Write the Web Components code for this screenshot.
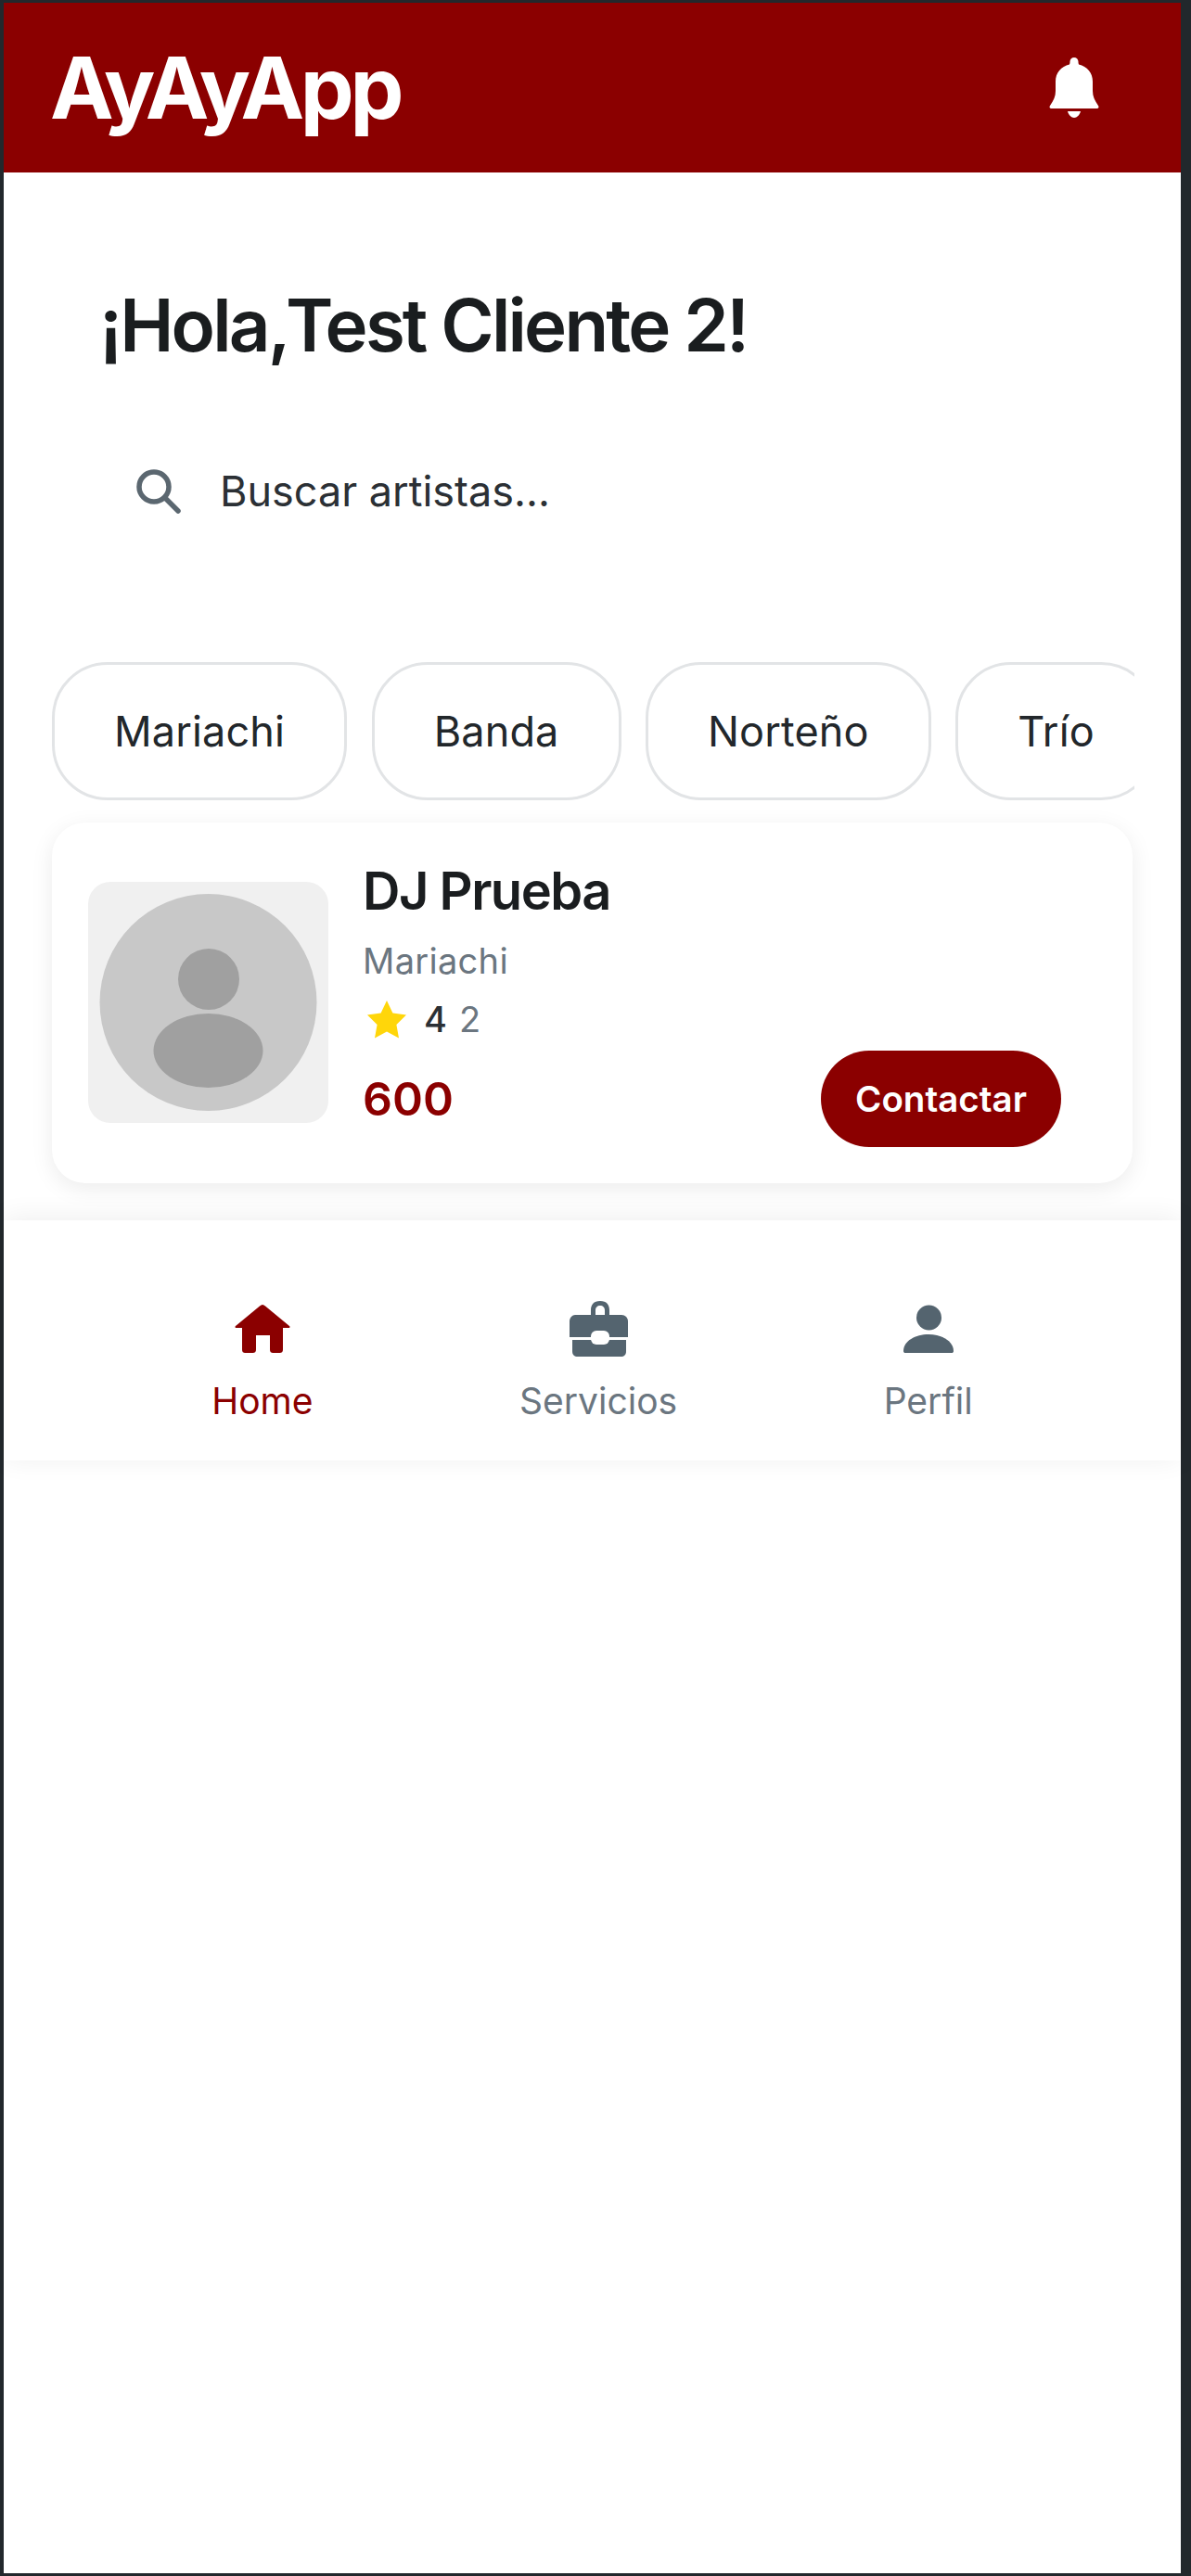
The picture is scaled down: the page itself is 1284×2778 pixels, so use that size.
<!DOCTYPE html>
<html><head><meta charset="utf-8"><style>
html,body{margin:0;padding:0;background:#22282c;height:2778px;overflow:hidden}
body{font-family:Inter,"Liberation Sans",sans-serif;box-sizing:border-box;padding:3px 11px 3px 4px}
</style></head><body>
<app-frame>
  <app-header slot="top" title-text="AyAyApp"></app-header>
  <greeting-title>¡Hola,Test Cliente 2!</greeting-title>
  <search-box placeholder="Buscar artistas..."></search-box>
  <chip-row>
    <filter-chip>Mariachi</filter-chip>
    <filter-chip>Banda</filter-chip>
    <filter-chip>Norteño</filter-chip>
    <filter-chip>Trío</filter-chip>
  </chip-row>
  <artist-card name="DJ Prueba" genre="Mariachi" rating="4" count="2" price="600"></artist-card>
  <bottom-nav></bottom-nav>
</app-frame>
<script>
function def(name, html){
  const t=document.createElement('template');t.innerHTML=html;
  customElements.define(name, class extends HTMLElement{
    connectedCallback(){ if(this.shadowRoot) return; const s=this.attachShadow({mode:'open'});
      s.appendChild(t.content.cloneNode(true));
      s.querySelectorAll('[data-a]').forEach(e=>{e.textContent=this.getAttribute(e.dataset.a)||''});
    }
  });
}
def('app-frame',`<style>:host{display:block;background:#fff;height:2772px;color:#1a1d1f}</style><slot name="top"></slot><slot></slot>`);
def('app-header',`<style>:host{display:flex;align-items:center;justify-content:space-between;height:183px;background:#8b0000;padding:0 88px 0 50px;box-sizing:border-box}
.t{font:700 92px/1 Inter,sans-serif;color:#fff;letter-spacing:-4.4px}
svg{display:block;width:54px;height:65px}</style>
<div class="t" data-a="title-text"></div>
<svg viewBox="0 0 54 65" fill="#fff"><path d="M27 0c2.500 0 4.500 2 4.500 4.500 0 1 0 2 .5 3C41 10 47 16 47 26V36c0 6 2 10 6 16 1 1.500.5 3-1.500 3H2.500C.5 55 0 53.500 1 52c4-6 6-10 6-16V26C7 16 13 10 22 7.500c.5-1 .5-2 .5-3C22.500 2 24.500 0 27 0z"/><path d="M20 58h14c-1 4-4 7-7 7s-6-3-7-7z"/></svg>`);
def('greeting-title',`<style>:host{display:block;padding:120px 0 0 103px;font:600 78px/90px Inter,sans-serif;letter-spacing:-2.85px;color:#1a1d1f}</style><slot></slot>`);
def('search-box',`<style>:host{display:flex;align-items:center;gap:42px;padding:0 0 0 143px;margin-top:104px;height:60px;font:400 45px/60px Inter,sans-serif;color:#2b3035}
svg{width:48px;height:48px;display:block;flex:none}</style>
<svg viewBox="0 0 48 48" fill="none" stroke="#5b6770" stroke-width="5.500"><circle cx="19" cy="19" r="16"/><path d="M31 31l14 14" stroke-linecap="round"/></svg><span data-a="placeholder"></span>`);
def('chip-row',`<style>:host{display:flex;gap:26.5px;margin:154px 50px 0 52px;overflow:hidden}</style><slot></slot>`);
def('filter-chip',`<style>:host{display:flex;flex:none;align-items:center;justify-content:center;height:149px;padding:0 64px;box-sizing:border-box;border:3px solid #e2e4e6;border-radius:60px;background:#fff;font:400 45px/1 Inter,sans-serif;letter-spacing:.15px;color:#22272b}</style><slot></slot>`);
def('artist-card',`<style>:host{display:flex;gap:37px;margin:24px 52px 0 52px;height:389px;box-sizing:border-box;padding:64px 77px 0 39px;background:#fff;border-radius:36px;box-shadow:0 6px 24px rgba(0,0,0,.08)}
.av{width:259px;height:260px;flex:none;background:#f0f0f0;border-radius:24px}
.av svg{display:block;width:100%;height:100%}
.b{flex:1;margin-top:-24px;min-width:0}
.n{font:600 56px/68px Inter,sans-serif;letter-spacing:-1.5px;color:#1a1d1f}
.g{font:400 38px/46px Inter,sans-serif;color:#6b7680;margin-top:18px;letter-spacing:.3px}
.r{display:flex;align-items:center;height:44px;margin-top:18px;font:500 38px/44px Inter,sans-serif;color:#2b3035}
.r svg{width:46px;height:44px;margin:0 17px 0 3px;flex:none}
.c{font-weight:400;color:#6b7680;margin-left:13px}
.f{display:flex;justify-content:space-between;align-items:center;margin-top:12px}
.p{font:600 50px/1 Inter,sans-serif;color:#8b0000}
.btn{display:flex;align-items:center;justify-content:center;width:259px;height:104px;border-radius:52px;background:#8b0000;color:#fff;font:600 38.5px/1 Inter,sans-serif}</style>
<div class="av"><svg viewBox="0 0 259 260"><circle cx="129.500" cy="130" r="117" fill="#c8c8c8"/><circle cx="130" cy="105" r="33" fill="#a0a0a0"/><ellipse cx="129.500" cy="182" rx="59" ry="40" fill="#a0a0a0"/></svg></div>
<div class="b"><div class="n" data-a="name"></div><div class="g" data-a="genre"></div>
<div class="r"><svg viewBox="0 0 46 44"><path fill="#ffd60a" d="M23 2l6.400 13.600 14.600 2-10.600 10.400 2.600 14.600L23 35.600 10 42.600l2.600-14.600L2 17.600l14.600-2z"/></svg><span data-a="rating"></span><span class="c" data-a="count"></span></div>
<div class="f"><span class="p" data-a="price"></span><span class="btn">Contactar</span></div></div>`);
def('bottom-nav',`<style>:host{display:flex;justify-content:space-around;margin-top:40px;height:259px;box-sizing:border-box;padding:87px 113px 0 113px;background:#fff;box-shadow:0 -2px 28px rgba(0,0,0,.07)}
.i{display:flex;flex-direction:column;align-items:center;font:400 39px/48px Inter,sans-serif;color:#6b7680}
.i.on{color:#8b0000}
svg{display:block;width:64px;height:60px;margin-bottom:24px}</style>
<div class="i on"><svg viewBox="0 0 64 60" fill="#8b0000"><path d="M32 4c1 0 2 .5 3 1.500L61 27c1 1 .5 2-1 2H54V52c0 3-1 4-4 4H44c-3 0-4-1-4-4V37H25V52c0 3-1 4-4 4H14c-3 0-4-1-4-4V29H4c-1.500 0-2-1-1-2L29 5.500C30 4.500 31 4 32 4z"/></svg>Home</div>
<div class="i"><svg viewBox="0 0 64 60" fill="#54646f"><path d="M24 15V10C24 4 27 0 34 0s10 4 10 10v5h-5v-5c0-3-2-5-5-5s-5 2-5 5v5z"/><path d="M7 15H57c4 0 7 3 7 7V39H1V22c0-4 3-7 6-7z"/><path d="M4 42H62V54c0 4-2 6-6 6H10c-4 0-6-2-6-6z"/><rect x="24" y="32" width="20" height="15" rx="6" fill="#fff"/></svg>Servicios</div>
<div class="i"><svg viewBox="0 0 64 60" fill="#54646f"><circle cx="32.500" cy="18" r="13.500"/><path d="M5 54C5 43 18 36 32 36S59 43 59 54c0 1.500-1 2-2 2H7c-1 0-2-.5-2-2z"/></svg>Perfil</div>`);
</script>
</body></html>
